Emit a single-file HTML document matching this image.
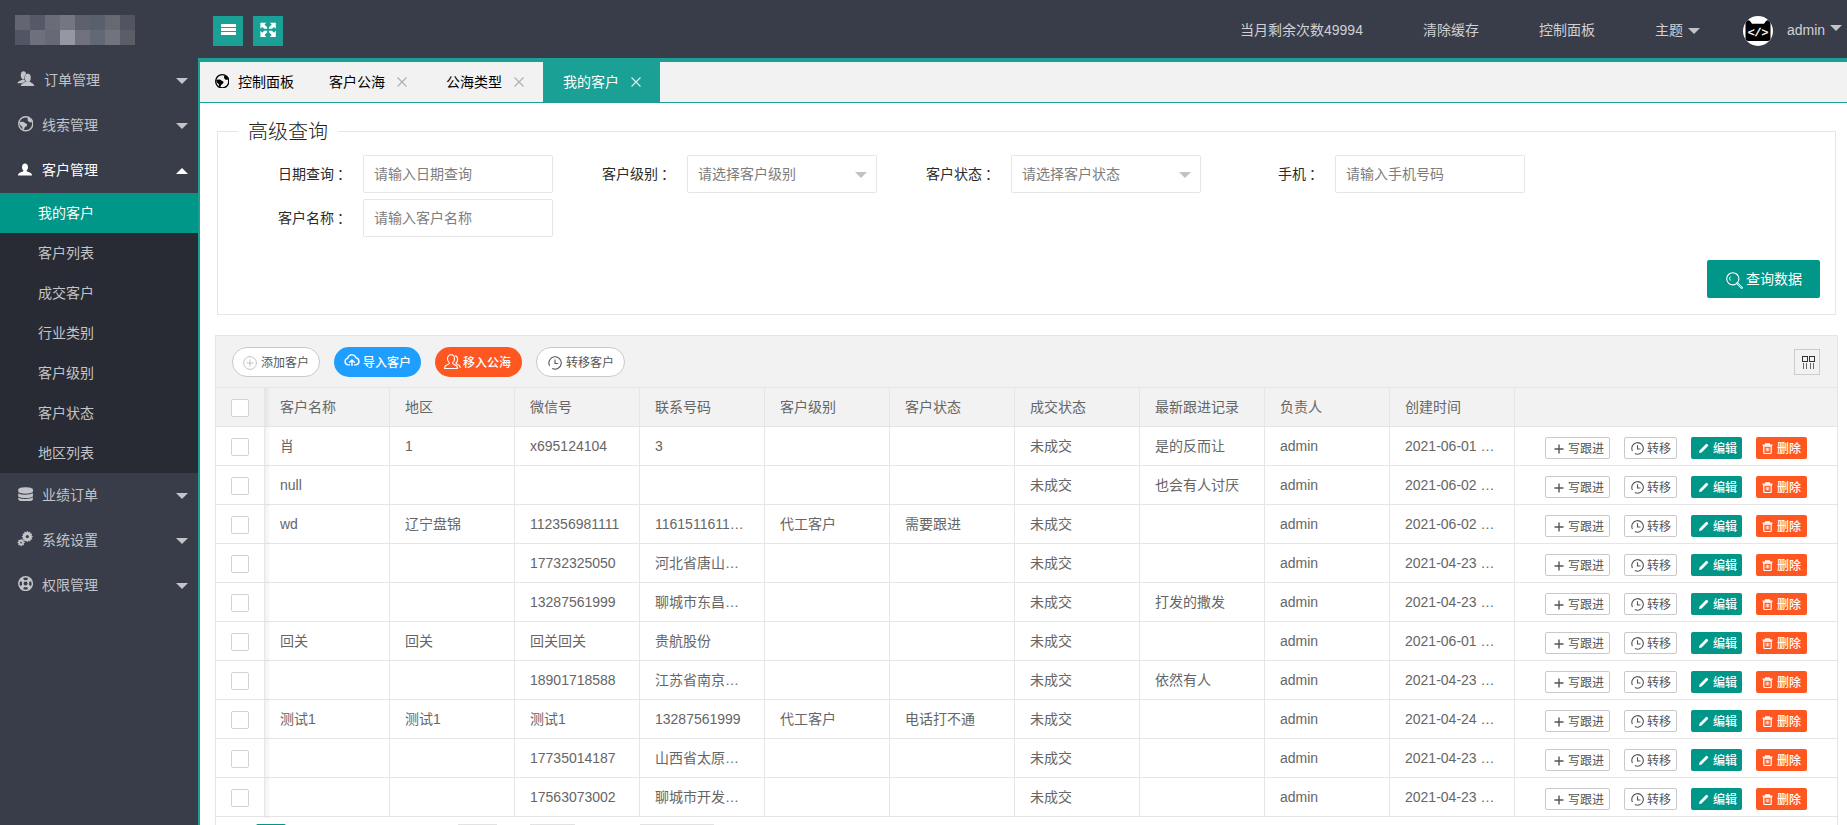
<!DOCTYPE html>
<html lang="zh-CN">
<head>
<meta charset="utf-8">
<title>我的客户</title>
<style>
*{box-sizing:border-box;margin:0;padding:0}
html,body{width:1847px;height:825px;overflow:hidden;background:#fff}
body{font-family:"Liberation Sans","Noto Sans CJK SC",sans-serif;font-size:14px;color:#333;position:relative;line-height:24px}
svg{display:block}
.abs{position:absolute}
#header{position:absolute;left:0;top:0;width:1847px;height:58px;background:#393d49}
#logo{position:absolute;left:15px;top:15px;width:120px;height:30px;overflow:hidden}
#logo i{position:absolute;display:block;width:15px;height:15px}
.hbtn{position:absolute;top:16px;width:30px;height:30px;background:#1aa094}
.hbtn svg{position:absolute;left:0;top:0}
.hnav{position:absolute;top:0;height:58px;line-height:60px;color:#d0d1d4;font-size:14px;white-space:nowrap}
.tri{position:absolute;width:0;height:0;border:6px solid transparent}
#side{position:absolute;left:0;top:58px;width:198px;height:767px;background:#393d49}
.nav1{position:absolute;left:0;width:198px;height:45px;line-height:45px;color:#c3c4c8;font-size:14px;white-space:nowrap}
.nav1 span{position:absolute;left:42px;top:0}
.nav1 svg{position:absolute}
.nav1.on{color:#fff}
#sub{position:absolute;left:0;top:135px;width:198px;height:280px;background:#282b33}
.nav2{position:absolute;left:0;width:198px;height:40px;line-height:40px;color:#c3c4c8;padding-left:38px;font-size:14px;white-space:nowrap}
.nav2.on{background:#009688;color:#fff}
#bl{position:absolute;left:198px;top:58px;width:2px;height:767px;background:#1aa094}
#bt{position:absolute;left:198px;top:58px;width:1649px;height:4px;background:#1aa094}
#tabs{position:absolute;left:200px;top:62px;width:1647px;height:40px;background:#f2f2f2}
#tabline{position:absolute;left:200px;top:102px;width:1647px;height:1px;background:#1aa094}
.tab{position:absolute;top:0;height:40px;line-height:40px;font-size:14px;color:#000;white-space:nowrap}
.tab.on{background:#1aa094;color:#fff}
.tab span{position:absolute;top:0}
.tab svg{position:absolute}
#fs{position:absolute;left:217px;top:131px;width:1619px;height:184px;border:1px solid #e6e6e6}
#legend{position:absolute;left:238px;top:117px;width:100px;height:30px;background:#fff;font-size:20px;font-weight:300;line-height:30px;padding-left:10px;color:#222;white-space:nowrap}
.lbl{position:absolute;width:110px;height:38px;line-height:38px;padding-right:15px;text-align:right;font-size:14px;color:#2a2a2a;white-space:nowrap}
.lbl b{font-weight:normal;position:relative;left:3px}
.inp{position:absolute;width:190px;height:38px;border:1px solid #e6e6e6;border-radius:2px;background:#fff;line-height:36px;padding-left:10px;color:#7d7d7d;font-size:14px;white-space:nowrap}
.inp .tri{right:9px;top:15.500px;border-top-color:#c2c2c2}
#qbtn{position:absolute;left:1707px;top:260px;width:113px;height:38px;background:#009688;border-radius:2px;color:#fff;font-size:14px;line-height:38px;white-space:nowrap}
#qbtn span{position:absolute;left:39px;top:0}
#qbtn svg{position:absolute;left:19px;top:11.500px}
#tb{position:absolute;left:215px;top:335px;width:1623px;height:500px;border:1px solid #e6e6e6;background:#fff}
#tool{position:absolute;left:0;top:0;width:1621px;height:52px;background:#f2f2f2;border-bottom:1px solid #e6e6e6}
.pill{position:absolute;top:11px;height:30px;line-height:30px;border-radius:100px;font-size:12px;color:#fff;white-space:nowrap}
.pill.pri{background:#fff;border:1px solid #c9c9c9;color:#555;line-height:28px}
.pill span{position:absolute;top:1px}
.pill svg{position:absolute}
#colbtn{position:absolute;left:1578px;top:13px;width:26px;height:26px;border:1px solid #ccc;background:#f2f2f2}
#thead{position:absolute;left:0;top:52px;width:1621px;height:39px;background:#f2f2f2;border-bottom:1px solid #e6e6e6}
.row{position:absolute;left:0;width:1621px;height:39px;border-bottom:1px solid #e6e6e6;background:#fff}
.c{position:absolute;top:0;height:38px;line-height:38px;padding-left:15px;border-right:1px solid #e6e6e6;width:125px;color:#666;font-size:14px;white-space:nowrap;overflow:hidden}
.ck{position:absolute;left:15px;top:11px;width:18px;height:18px;border:1px solid #d2d2d2;border-radius:2px;background:#fff}
.c0{left:0;width:49px}
.c1{left:49px}.c2{left:174px}.c3{left:299px}.c4{left:424px}.c5{left:549px}.c6{left:674px}.c7{left:799px}.c8{left:924px}.c9{left:1049px}.c10{left:1174px}
.c11{left:1299px;width:322px;border-right:0}
.b{position:absolute;top:10px;height:22px;line-height:22px;font-size:12px;border-radius:2px;color:#fff;white-space:nowrap}
.b.pri{background:#fff;border:1px solid #c9c9c9;color:#555;line-height:20px}
.b span{position:absolute;top:1px}
.b3 span,.b4 span,.pill.fw span{font-weight:500}
.b svg{position:absolute}
.b1{left:30px;width:65px}.b2{left:109px;width:53px}.b3{left:176px;width:51px;background:#009688}.b4{left:241px;width:51px;background:#ff5722}
#shadow{position:absolute;left:49px;top:52px;width:6px;height:430px;background:linear-gradient(to right,rgba(0,0,0,.05),rgba(0,0,0,0))}
</style>
</head>
<body>
<div id="header">
<div id="logo"><i style="left:0px;top:0;background:#636572"></i><i style="left:15px;top:0;background:#555967"></i><i style="left:30px;top:0;background:#6a6c77"></i><i style="left:45px;top:0;background:#747680"></i><i style="left:60px;top:0;background:#5e606b"></i><i style="left:75px;top:0;background:#58606c"></i><i style="left:90px;top:0;background:#666872"></i><i style="left:105px;top:0;background:#525561"></i><i style="left:0px;top:15px;background:#525664"></i><i style="left:15px;top:15px;background:#6e717b"></i><i style="left:30px;top:15px;background:#676976"></i><i style="left:45px;top:15px;background:#9597a1"></i><i style="left:60px;top:15px;background:#70717e"></i><i style="left:75px;top:15px;background:#626974"></i><i style="left:90px;top:15px;background:#71737d"></i><i style="left:105px;top:15px;background:#5b5e66"></i></div>
<div class="hbtn" style="left:213px"><svg width="30" height="30" viewBox="0 0 30 30"><rect x="8" y="8" width="15" height="3" fill="#fff"/><rect x="8" y="12" width="15" height="3" fill="#fff"/><rect x="8" y="16" width="15" height="3" fill="#fff"/></svg></div>
<div class="hbtn" style="left:253px"><svg width="30" height="30" viewBox="0 0 30 30"><g fill="#fff"><path d="M7.4 6.7L13.4 6.7L11.5 8.6L14.2 11.3L14.2 12.8L11.2 12.8L9.3 10.9L7.4 12.8z"/><path d="M22.8 6.7L16.8 6.7L18.7 8.6L16.0 11.3L16.0 12.8L19.0 12.8L20.9 10.9L22.8 12.8z"/><path d="M7.4 20.9L13.4 20.9L11.5 19.0L14.2 16.3L14.2 14.8L11.2 14.8L9.3 16.7L7.4 14.8z"/><path d="M22.8 20.9L16.8 20.9L18.7 19.0L16.0 16.3L16.0 14.8L19.0 14.8L20.9 16.7L22.8 14.8z"/></g></svg></div>
<div class="hnav" style="left:1240px">当月剩余次数49994</div>
<div class="hnav" style="left:1423px">清除缓存</div>
<div class="hnav" style="left:1539px">控制面板</div>
<div class="hnav" style="left:1655px">主题</div>
<div class="tri" style="left:1688px;top:28px;border-top-color:#c3c4c8"></div>
<div class="abs" id="avatar" style="left:1743px;top:16px;width:30px;height:30px;border-radius:50%;background:#fff;overflow:hidden"><svg width="30" height="30" viewBox="0 1 30 30"><path d="M4.400 5.300Q6 5 7 6L9 8.700H21L23 6Q24 5 25.600 5.300Q27.500 6 27.500 8V23.600Q27.500 26 25 26H5Q2.500 26 2.500 23.600V8Q2.500 6 4.400 5.300z" fill="#000"/><text x="15" y="21" font-size="11.500" font-family="Liberation Mono,monospace" stroke="#fff" stroke-width=".35" fill="#fff" text-anchor="middle">&lt;/&gt;</text></svg></div>
<div class="hnav" style="left:1787px">admin</div>
<div class="tri" style="left:1830px;top:25px;border-top-color:#c3c4c8"></div>
</div>
<div id="side">
<div class="nav1" style="top:0px"><svg style="left:17px;top:12px" width="18" height="17" viewBox="0 0 18 17"><g fill="#c3c4c8"><ellipse cx="6.500" cy="5.300" rx="2.700" ry="4.100"/><path d="M.4 13.300C.7 11.500 3 10.900 5.200 9.800L7.800 9.800 7.800 13.300z"/><g stroke="#393d49" stroke-width=".9"><ellipse cx="10.800" cy="7.700" rx="3" ry="4"/><path d="M3.800 16C4.100 13.600 7 12.900 9.300 11.400L12.300 11.400C14.600 12.900 16.900 13.600 17.300 16z"/></g><ellipse cx="10.800" cy="7.700" rx="2.900" ry="3.900"/><path d="M3.800 16C4.100 13.600 7 12.900 9.300 11.200L12.300 11.200C14.600 12.900 16.900 13.600 17.300 16z"/></g></svg><span style="left:44px">订单管理</span><div class="tri" style="left:176px;top:20px;border-top-color:#c3c4c8"></div></div>
<div class="nav1" style="top:45px"><svg style="left:17.5px;top:13.2px" width="15.5" height="15.5" viewBox="0 0 15 15"><circle cx="7.500" cy="7.500" r="6.800" fill="none" stroke="#c3c4c8" stroke-width="1.3"/><path d="M1.500 5.900L5 5.600 8.800 8 8.500 9.600 6.600 11 5.600 13.300 4.200 13.100 4 10.500 2.200 9 1.400 7z" fill="#c3c4c8"/><path d="M9.500 1.800L11.800 2.500 13.600 5 12.600 6.300 10.500 5.600 9.300 4z" fill="#c3c4c8"/></svg><span style="left:42px">线索管理</span><div class="tri" style="left:176px;top:20px;border-top-color:#c3c4c8"></div></div>
<div class="nav1 on" style="top:90px"><svg style="left:18px;top:14.500px" width="14" height="13" viewBox="0 0 14 13"><path d="M7 .5c1.800 0 3 1.500 3 3.600 0 1.700-.7 2.900-1.500 3.500 0 .7.500 1 2 1.500 1.800.6 3.500 1.400 3.500 3.400H0c0-2 1.700-2.800 3.500-3.400 1.500-.5 2-.8 2-1.500-.8-.6-1.500-1.800-1.500-3.500C4 2 5.200.5 7 .5z" fill="#fff"/></svg><span style="left:42px">客户管理</span><div class="tri" style="left:176px;top:14px;border-bottom-color:#fff"></div></div>
<div id="sub"><div class="nav2 on" style="top:0px">我的客户</div><div class="nav2" style="top:40px">客户列表</div><div class="nav2" style="top:80px">成交客户</div><div class="nav2" style="top:120px">行业类别</div><div class="nav2" style="top:160px">客户级别</div><div class="nav2" style="top:200px">客户状态</div><div class="nav2" style="top:240px">地区列表</div></div>
<div class="nav1" style="top:415px"><svg style="left:17.500px;top:13.500px" width="15.200" height="14.600" viewBox="0 0 15 14.500"><path d="M.2 2.600C.2-.5 14.800-.5 14.800 2.600V11.900C14.800 15.300.2 15.300.2 11.900z" fill="#c3c4c8"/><path d="M0 5.500C3 7.700 12 7.700 15 5.500M0 9.800C3 12 12 12 15 9.800" fill="none" stroke="#393d49" stroke-width="1.100"/></svg><span style="left:42px">业绩订单</span><div class="tri" style="left:176px;top:20px;border-top-color:#c3c4c8"></div></div>
<div class="nav1" style="top:460px"><svg style="left:17px;top:12px" width="17" height="17" viewBox="0 0 17 17"><path d="M15.78 6.17L15.78 7.03L14.72 7.42L14.54 8.10L15.26 8.97L14.83 9.72L13.72 9.52L13.22 10.02L13.42 11.13L12.67 11.56L11.80 10.84L11.12 11.02L10.73 12.08L9.87 12.08L9.48 11.02L8.80 10.84L7.93 11.56L7.18 11.13L7.38 10.02L6.88 9.52L5.77 9.72L5.34 8.97L6.06 8.10L5.88 7.42L4.82 7.03L4.82 6.17L5.88 5.78L6.06 5.10L5.34 4.23L5.77 3.48L6.88 3.68L7.38 3.18L7.18 2.07L7.93 1.64L8.80 2.36L9.48 2.18L9.87 1.12L10.73 1.12L11.12 2.18L11.80 2.36L12.67 1.64L13.42 2.07L13.22 3.18L13.72 3.68L14.83 3.48L15.26 4.23L14.54 5.10L14.72 5.78z" fill="#c3c4c8"/><circle cx="10.3" cy="6.6" r="1.6" fill="#393d49"/><path d="M7.77 12.17L7.77 13.03L6.79 13.36L6.54 13.97L7.01 14.89L6.39 15.51L5.47 15.04L4.86 15.29L4.53 16.27L3.67 16.27L3.34 15.29L2.73 15.04L1.81 15.51L1.19 14.89L1.66 13.97L1.41 13.36L0.43 13.03L0.43 12.17L1.41 11.84L1.66 11.23L1.19 10.31L1.81 9.69L2.73 10.16L3.34 9.91L3.67 8.93L4.53 8.93L4.86 9.91L5.47 10.16L6.39 9.69L7.01 10.31L6.54 11.23L6.79 11.84z" fill="#c3c4c8"/><circle cx="4.1" cy="12.6" r="0.9" fill="#393d49"/></svg><span style="left:42px">系统设置</span><div class="tri" style="left:176px;top:20px;border-top-color:#c3c4c8"></div></div>
<div class="nav1" style="top:505px"><svg style="left:17.500px;top:13.200px" width="15.200" height="15.200" viewBox="0 0 15.200 15.200"><circle cx="7.600" cy="7.600" r="7.500" fill="#c3c4c8"/><circle cx="7.600" cy="7.600" r="2" fill="#393d49"/><path d="M6.10 4.22L5.16 2.12A6.0 6.0 0 0 1 10.04 2.12L9.10 4.22A3.7 3.7 0 0 0 6.10 4.22z" fill="#393d49"/><path d="M10.98 6.10L13.08 5.16A6.0 6.0 0 0 1 13.08 10.04L10.98 9.10A3.7 3.7 0 0 0 10.98 6.10z" fill="#393d49"/><path d="M9.10 10.98L10.04 13.08A6.0 6.0 0 0 1 5.16 13.08L6.10 10.98A3.7 3.7 0 0 0 9.10 10.98z" fill="#393d49"/><path d="M4.22 9.10L2.12 10.04A6.0 6.0 0 0 1 2.12 5.16L4.22 6.10A3.7 3.7 0 0 0 4.22 9.10z" fill="#393d49"/></svg><span style="left:42px">权限管理</span><div class="tri" style="left:176px;top:20px;border-top-color:#c3c4c8"></div></div>
</div>
<div id="bl"></div><div id="bt"></div>
<div id="tabs">
<div class="tab" style="left:0;width:109px"><svg style="left:14.7px;top:11.7px" width="14.5" height="14.5" viewBox="0 0 15 15"><circle cx="7.500" cy="7.500" r="6.800" fill="none" stroke="#000" stroke-width="1.4"/><path d="M1.500 5.900L5 5.600 8.800 8 8.500 9.600 6.600 11 5.600 13.300 4.200 13.100 4 10.500 2.200 9 1.400 7z" fill="#000"/><path d="M9.500 1.800L11.800 2.500 13.600 5 12.600 6.300 10.500 5.600 9.300 4z" fill="#000"/></svg><span style="left:38px">控制面板</span></div>
<div class="tab" style="left:109px;width:117px"><span style="left:20px">客户公海</span><svg style="left:88px;top:15px" width="10" height="10" viewBox="0 0 10 10"><path d="M.5.500l9 9M9.500.500l-9 9" stroke="#b0b0b0" stroke-width="1.2" fill="none"/></svg></div>
<div class="tab" style="left:226px;width:117px"><span style="left:20px">公海类型</span><svg style="left:88px;top:15px" width="10" height="10" viewBox="0 0 10 10"><path d="M.5.500l9 9M9.500.500l-9 9" stroke="#b0b0b0" stroke-width="1.2" fill="none"/></svg></div>
<div class="tab on" style="left:343px;width:117px"><span style="left:20px">我的客户</span><svg style="left:88px;top:15px" width="10" height="10" viewBox="0 0 10 10"><path d="M.5.500l9 9M9.500.500l-9 9" stroke="#d8efed" stroke-width="1.2" fill="none"/></svg></div>
</div><div id="tabline"></div>
<div id="fs"></div>
<div id="legend">高级查询</div>
<div class="lbl" style="left:253px;top:155px">日期查询<b>：</b></div>
<div class="inp" style="left:363px;top:155px">请输入日期查询</div>
<div class="lbl" style="left:577px;top:155px">客户级别<b>：</b></div>
<div class="inp" style="left:687px;top:155px">请选择客户级别<div class=tri></div></div>
<div class="lbl" style="left:901px;top:155px">客户状态<b>：</b></div>
<div class="inp" style="left:1011px;top:155px">请选择客户状态<div class=tri></div></div>
<div class="lbl" style="left:1225px;top:155px">手机<b>：</b></div>
<div class="inp" style="left:1335px;top:155px">请输入手机号码</div>
<div class="lbl" style="left:253px;top:199px">客户名称<b>：</b></div>
<div class="inp" style="left:363px;top:199px">请输入客户名称</div>
<div id="qbtn"><svg width="17" height="17" viewBox="0 0 17 17"><circle cx="6.800" cy="6.800" r="6.100" fill="none" stroke="#fff" stroke-width="1.100"/><path d="M4.300 4.600a3.400 3.400 0 0 0 0 4" fill="none" stroke="#fff" stroke-width="1"/><path d="M11.200 11.200l4.600 4.600" stroke="#fff" stroke-width="2.200" stroke-linecap="round"/><path d="M11.700 11.700l3.800 3.800" stroke="#009688" stroke-width=".7" stroke-linecap="round"/></svg><span>查询数据</span></div>
<div id="tb">
<div id="tool">
<div class="pill pri" style="left:16px;width:88px"><svg style="left:10px;top:8px" width="14" height="14" viewBox="0 0 14 14"><circle cx="7" cy="7" r="6.400" fill="none" stroke="#bbb" stroke-width=".9"/><path d="M7 3.500v7M3.500 7h7" stroke="#bbb" stroke-width=".9"/></svg><span style="left:28px">添加客户</span></div>
<div class="pill fw" style="left:118px;width:87px;background:#1e9fff"><svg style="left:10px;top:7px" width="16" height="12" viewBox="0 0 16 12"><path d="M5.500 10.900H4.200A3.300 3.300 0 0 1 3.600 4.400 4.400 4.400 0 0 1 12 3.700a3.700 3.700 0 0 1 .2 7.200h-1.700" fill="none" stroke="#fff" stroke-width="1.400" stroke-linecap="round"/><path d="M8 11.500V6.200M5.700 8.300L8 6l2.300 2.300" fill="none" stroke="#fff" stroke-width="1.400" stroke-linecap="round" stroke-linejoin="round"/></svg><span style="left:29px">导入客户</span></div>
<div class="pill fw" style="left:219px;width:87px;background:#ff5722"><svg style="left:9px;top:7px" width="17" height="16" viewBox="0 0 17 16"><path d="M7 .800c2.100 0 3.500 1.700 3.500 4 0 1.900-.9 3.400-1.900 4.100 0 .8.600 1.200 2.200 1.900 1.900.7 2.700 1.500 2.700 3.700H.500c0-2.200.8-3 2.700-3.700 1.600-.7 2.200-1.100 2.200-1.900-1-.7-1.900-2.200-1.900-4.100 0-2.300 1.400-4 3.500-4z" fill="none" stroke="#fff" stroke-width="1.100" stroke-linejoin="round"/><path d="M11.300 1.800c1.500.5 2.300 1.900 2.300 3.700 0 1.700-.7 2.900-1.600 3.600.1.700.7 1.100 2 1.700 1.500.6 2.200 1.300 2.300 2.700" fill="none" stroke="#fff" stroke-width="1.100" stroke-linecap="round"/></svg><span style="left:28px">移入公海</span></div>
<div class="pill pri" style="left:320px;width:89px"><svg style="left:11px;top:8px" width="14" height="14" viewBox="0 0 14 14"><path d="M4.200 12.400A6.200 6.200 0 1 0 1.600 9.800" fill="none" stroke="#555" stroke-width="1.1"/><path d="M7 3.500v4h3.200" fill="none" stroke="#555" stroke-width="1.1"/></svg><span style="left:29px">转移客户</span></div>
<div id="colbtn"><svg width="24" height="24" viewBox="0 0 24 24"><g fill="none" stroke="#333" stroke-width="1"><rect x="7.500" y="6.500" width="5" height="5"/><rect x="14.500" y="6.500" width="5" height="5"/></g><path d="M8.500 13v6M11.500 13v6M15.500 13v6M18.500 13v6" stroke="#666" stroke-width="1" fill="none"/></svg></div>
</div>
<div id="thead"><div class="c c0" style="background:#f2f2f2"><div class="ck" style="top:11px"></div></div><div class="c c1">客户名称</div><div class="c c2">地区</div><div class="c c3">微信号</div><div class="c c4">联系号码</div><div class="c c5">客户级别</div><div class="c c6">客户状态</div><div class="c c7">成交状态</div><div class="c c8">最新跟进记录</div><div class="c c9">负责人</div><div class="c c10">创建时间</div><div class="c c11"></div></div>
<div class="row" style="top:91px"><div class="c c0"><div class="ck"></div></div><div class="c c1">肖</div><div class="c c2">1</div><div class="c c3">x695124104</div><div class="c c4">3</div><div class="c c5"></div><div class="c c6"></div><div class="c c7">未成交</div><div class="c c8">是的反而让</div><div class="c c9">admin</div><div class="c c10">2021-06-01 …</div><div class="c c11"><div class="b pri b1"><svg style="left:7.500px;top:6px" width="10" height="10" viewBox="0 0 10 10"><path d="M5 .500v9M.500 5h9" stroke="#555" stroke-width="1.400"/></svg><span style="left:22px">写跟进</span></div><div class="b pri b2"><svg style="left:5.7px;top:4px" width="13" height="13" viewBox="0 0 14 14"><path d="M4.200 12.400A6.200 6.200 0 1 0 1.600 9.800" fill="none" stroke="#555" stroke-width="1.2"/><path d="M7 3.500v4h3.200" fill="none" stroke="#555" stroke-width="1.2"/></svg><span style="left:22px">转移</span></div><div class="b b3"><svg style="left:6.500px;top:5.500px" width="11" height="11" viewBox="0 0 11 11"><path d="M1 10l.6-2.600L8 1a.8.800 0 0 1 1.100 0l.9.900a.8.800 0 0 1 0 1.100L3.600 9.400z" fill="#fff"/></svg><span style="left:22px">编辑</span></div><div class="b b4"><svg style="left:6px;top:5.500px" width="11" height="11" viewBox="0 0 11 11"><path d="M.5 2.200h10M3.600 2V.900h3.800V2" fill="none" stroke="#fff" stroke-width="1.200"/><path d="M1.800 3.200h7.400v6.300a1 1 0 0 1-1 1H2.800a1 1 0 0 1-1-1z" fill="none" stroke="#fff" stroke-width="1.200"/><path d="M4.200 4.800v3.600M5.500 4.800v3.600M6.800 4.800v3.600" stroke="#fff" stroke-width=".8"/></svg><span style="left:21px">删除</span></div></div></div>
<div class="row" style="top:130px"><div class="c c0"><div class="ck"></div></div><div class="c c1">null</div><div class="c c2"></div><div class="c c3"></div><div class="c c4"></div><div class="c c5"></div><div class="c c6"></div><div class="c c7">未成交</div><div class="c c8">也会有人讨厌</div><div class="c c9">admin</div><div class="c c10">2021-06-02 …</div><div class="c c11"><div class="b pri b1"><svg style="left:7.500px;top:6px" width="10" height="10" viewBox="0 0 10 10"><path d="M5 .500v9M.500 5h9" stroke="#555" stroke-width="1.400"/></svg><span style="left:22px">写跟进</span></div><div class="b pri b2"><svg style="left:5.7px;top:4px" width="13" height="13" viewBox="0 0 14 14"><path d="M4.200 12.400A6.200 6.200 0 1 0 1.600 9.800" fill="none" stroke="#555" stroke-width="1.2"/><path d="M7 3.500v4h3.200" fill="none" stroke="#555" stroke-width="1.2"/></svg><span style="left:22px">转移</span></div><div class="b b3"><svg style="left:6.500px;top:5.500px" width="11" height="11" viewBox="0 0 11 11"><path d="M1 10l.6-2.600L8 1a.8.800 0 0 1 1.100 0l.9.900a.8.800 0 0 1 0 1.100L3.600 9.400z" fill="#fff"/></svg><span style="left:22px">编辑</span></div><div class="b b4"><svg style="left:6px;top:5.500px" width="11" height="11" viewBox="0 0 11 11"><path d="M.5 2.200h10M3.600 2V.900h3.800V2" fill="none" stroke="#fff" stroke-width="1.200"/><path d="M1.800 3.200h7.400v6.300a1 1 0 0 1-1 1H2.800a1 1 0 0 1-1-1z" fill="none" stroke="#fff" stroke-width="1.200"/><path d="M4.200 4.800v3.600M5.500 4.800v3.600M6.800 4.800v3.600" stroke="#fff" stroke-width=".8"/></svg><span style="left:21px">删除</span></div></div></div>
<div class="row" style="top:169px"><div class="c c0"><div class="ck"></div></div><div class="c c1">wd</div><div class="c c2">辽宁盘锦</div><div class="c c3">112356981111</div><div class="c c4">1161511611…</div><div class="c c5">代工客户</div><div class="c c6">需要跟进</div><div class="c c7">未成交</div><div class="c c8"></div><div class="c c9">admin</div><div class="c c10">2021-06-02 …</div><div class="c c11"><div class="b pri b1"><svg style="left:7.500px;top:6px" width="10" height="10" viewBox="0 0 10 10"><path d="M5 .500v9M.500 5h9" stroke="#555" stroke-width="1.400"/></svg><span style="left:22px">写跟进</span></div><div class="b pri b2"><svg style="left:5.7px;top:4px" width="13" height="13" viewBox="0 0 14 14"><path d="M4.200 12.400A6.200 6.200 0 1 0 1.600 9.800" fill="none" stroke="#555" stroke-width="1.2"/><path d="M7 3.500v4h3.200" fill="none" stroke="#555" stroke-width="1.2"/></svg><span style="left:22px">转移</span></div><div class="b b3"><svg style="left:6.500px;top:5.500px" width="11" height="11" viewBox="0 0 11 11"><path d="M1 10l.6-2.600L8 1a.8.800 0 0 1 1.100 0l.9.900a.8.800 0 0 1 0 1.100L3.600 9.400z" fill="#fff"/></svg><span style="left:22px">编辑</span></div><div class="b b4"><svg style="left:6px;top:5.500px" width="11" height="11" viewBox="0 0 11 11"><path d="M.5 2.200h10M3.600 2V.900h3.800V2" fill="none" stroke="#fff" stroke-width="1.200"/><path d="M1.800 3.200h7.400v6.300a1 1 0 0 1-1 1H2.800a1 1 0 0 1-1-1z" fill="none" stroke="#fff" stroke-width="1.200"/><path d="M4.200 4.800v3.600M5.500 4.800v3.600M6.800 4.800v3.600" stroke="#fff" stroke-width=".8"/></svg><span style="left:21px">删除</span></div></div></div>
<div class="row" style="top:208px"><div class="c c0"><div class="ck"></div></div><div class="c c1"></div><div class="c c2"></div><div class="c c3">17732325050</div><div class="c c4">河北省唐山…</div><div class="c c5"></div><div class="c c6"></div><div class="c c7">未成交</div><div class="c c8"></div><div class="c c9">admin</div><div class="c c10">2021-04-23 …</div><div class="c c11"><div class="b pri b1"><svg style="left:7.500px;top:6px" width="10" height="10" viewBox="0 0 10 10"><path d="M5 .500v9M.500 5h9" stroke="#555" stroke-width="1.400"/></svg><span style="left:22px">写跟进</span></div><div class="b pri b2"><svg style="left:5.7px;top:4px" width="13" height="13" viewBox="0 0 14 14"><path d="M4.200 12.400A6.200 6.200 0 1 0 1.600 9.800" fill="none" stroke="#555" stroke-width="1.2"/><path d="M7 3.500v4h3.200" fill="none" stroke="#555" stroke-width="1.2"/></svg><span style="left:22px">转移</span></div><div class="b b3"><svg style="left:6.500px;top:5.500px" width="11" height="11" viewBox="0 0 11 11"><path d="M1 10l.6-2.600L8 1a.8.800 0 0 1 1.100 0l.9.900a.8.800 0 0 1 0 1.100L3.600 9.400z" fill="#fff"/></svg><span style="left:22px">编辑</span></div><div class="b b4"><svg style="left:6px;top:5.500px" width="11" height="11" viewBox="0 0 11 11"><path d="M.5 2.200h10M3.600 2V.900h3.800V2" fill="none" stroke="#fff" stroke-width="1.200"/><path d="M1.800 3.200h7.400v6.300a1 1 0 0 1-1 1H2.800a1 1 0 0 1-1-1z" fill="none" stroke="#fff" stroke-width="1.200"/><path d="M4.200 4.800v3.600M5.500 4.800v3.600M6.800 4.800v3.600" stroke="#fff" stroke-width=".8"/></svg><span style="left:21px">删除</span></div></div></div>
<div class="row" style="top:247px"><div class="c c0"><div class="ck"></div></div><div class="c c1"></div><div class="c c2"></div><div class="c c3">13287561999</div><div class="c c4">聊城市东昌…</div><div class="c c5"></div><div class="c c6"></div><div class="c c7">未成交</div><div class="c c8">打发的撒发</div><div class="c c9">admin</div><div class="c c10">2021-04-23 …</div><div class="c c11"><div class="b pri b1"><svg style="left:7.500px;top:6px" width="10" height="10" viewBox="0 0 10 10"><path d="M5 .500v9M.500 5h9" stroke="#555" stroke-width="1.400"/></svg><span style="left:22px">写跟进</span></div><div class="b pri b2"><svg style="left:5.7px;top:4px" width="13" height="13" viewBox="0 0 14 14"><path d="M4.200 12.400A6.200 6.200 0 1 0 1.600 9.800" fill="none" stroke="#555" stroke-width="1.2"/><path d="M7 3.500v4h3.200" fill="none" stroke="#555" stroke-width="1.2"/></svg><span style="left:22px">转移</span></div><div class="b b3"><svg style="left:6.500px;top:5.500px" width="11" height="11" viewBox="0 0 11 11"><path d="M1 10l.6-2.600L8 1a.8.800 0 0 1 1.100 0l.9.900a.8.800 0 0 1 0 1.100L3.600 9.400z" fill="#fff"/></svg><span style="left:22px">编辑</span></div><div class="b b4"><svg style="left:6px;top:5.500px" width="11" height="11" viewBox="0 0 11 11"><path d="M.5 2.200h10M3.600 2V.900h3.800V2" fill="none" stroke="#fff" stroke-width="1.200"/><path d="M1.800 3.200h7.400v6.300a1 1 0 0 1-1 1H2.800a1 1 0 0 1-1-1z" fill="none" stroke="#fff" stroke-width="1.200"/><path d="M4.200 4.800v3.600M5.500 4.800v3.600M6.800 4.800v3.600" stroke="#fff" stroke-width=".8"/></svg><span style="left:21px">删除</span></div></div></div>
<div class="row" style="top:286px"><div class="c c0"><div class="ck"></div></div><div class="c c1">回关</div><div class="c c2">回关</div><div class="c c3">回关回关</div><div class="c c4">贵航股份</div><div class="c c5"></div><div class="c c6"></div><div class="c c7">未成交</div><div class="c c8"></div><div class="c c9">admin</div><div class="c c10">2021-06-01 …</div><div class="c c11"><div class="b pri b1"><svg style="left:7.500px;top:6px" width="10" height="10" viewBox="0 0 10 10"><path d="M5 .500v9M.500 5h9" stroke="#555" stroke-width="1.400"/></svg><span style="left:22px">写跟进</span></div><div class="b pri b2"><svg style="left:5.7px;top:4px" width="13" height="13" viewBox="0 0 14 14"><path d="M4.200 12.400A6.200 6.200 0 1 0 1.600 9.800" fill="none" stroke="#555" stroke-width="1.2"/><path d="M7 3.500v4h3.200" fill="none" stroke="#555" stroke-width="1.2"/></svg><span style="left:22px">转移</span></div><div class="b b3"><svg style="left:6.500px;top:5.500px" width="11" height="11" viewBox="0 0 11 11"><path d="M1 10l.6-2.600L8 1a.8.800 0 0 1 1.100 0l.9.900a.8.800 0 0 1 0 1.100L3.600 9.400z" fill="#fff"/></svg><span style="left:22px">编辑</span></div><div class="b b4"><svg style="left:6px;top:5.500px" width="11" height="11" viewBox="0 0 11 11"><path d="M.5 2.200h10M3.600 2V.900h3.800V2" fill="none" stroke="#fff" stroke-width="1.200"/><path d="M1.800 3.200h7.400v6.300a1 1 0 0 1-1 1H2.800a1 1 0 0 1-1-1z" fill="none" stroke="#fff" stroke-width="1.200"/><path d="M4.200 4.800v3.600M5.500 4.800v3.600M6.800 4.800v3.600" stroke="#fff" stroke-width=".8"/></svg><span style="left:21px">删除</span></div></div></div>
<div class="row" style="top:325px"><div class="c c0"><div class="ck"></div></div><div class="c c1"></div><div class="c c2"></div><div class="c c3">18901718588</div><div class="c c4">江苏省南京…</div><div class="c c5"></div><div class="c c6"></div><div class="c c7">未成交</div><div class="c c8">依然有人</div><div class="c c9">admin</div><div class="c c10">2021-04-23 …</div><div class="c c11"><div class="b pri b1"><svg style="left:7.500px;top:6px" width="10" height="10" viewBox="0 0 10 10"><path d="M5 .500v9M.500 5h9" stroke="#555" stroke-width="1.400"/></svg><span style="left:22px">写跟进</span></div><div class="b pri b2"><svg style="left:5.7px;top:4px" width="13" height="13" viewBox="0 0 14 14"><path d="M4.200 12.400A6.200 6.200 0 1 0 1.600 9.800" fill="none" stroke="#555" stroke-width="1.2"/><path d="M7 3.500v4h3.200" fill="none" stroke="#555" stroke-width="1.2"/></svg><span style="left:22px">转移</span></div><div class="b b3"><svg style="left:6.500px;top:5.500px" width="11" height="11" viewBox="0 0 11 11"><path d="M1 10l.6-2.600L8 1a.8.800 0 0 1 1.100 0l.9.900a.8.800 0 0 1 0 1.100L3.600 9.400z" fill="#fff"/></svg><span style="left:22px">编辑</span></div><div class="b b4"><svg style="left:6px;top:5.500px" width="11" height="11" viewBox="0 0 11 11"><path d="M.5 2.200h10M3.600 2V.900h3.800V2" fill="none" stroke="#fff" stroke-width="1.200"/><path d="M1.800 3.200h7.400v6.300a1 1 0 0 1-1 1H2.800a1 1 0 0 1-1-1z" fill="none" stroke="#fff" stroke-width="1.200"/><path d="M4.200 4.800v3.600M5.500 4.800v3.600M6.800 4.800v3.600" stroke="#fff" stroke-width=".8"/></svg><span style="left:21px">删除</span></div></div></div>
<div class="row" style="top:364px"><div class="c c0"><div class="ck"></div></div><div class="c c1">测试1</div><div class="c c2">测试1</div><div class="c c3">测试1</div><div class="c c4">13287561999</div><div class="c c5">代工客户</div><div class="c c6">电话打不通</div><div class="c c7">未成交</div><div class="c c8"></div><div class="c c9">admin</div><div class="c c10">2021-04-24 …</div><div class="c c11"><div class="b pri b1"><svg style="left:7.500px;top:6px" width="10" height="10" viewBox="0 0 10 10"><path d="M5 .500v9M.500 5h9" stroke="#555" stroke-width="1.400"/></svg><span style="left:22px">写跟进</span></div><div class="b pri b2"><svg style="left:5.7px;top:4px" width="13" height="13" viewBox="0 0 14 14"><path d="M4.200 12.400A6.200 6.200 0 1 0 1.600 9.800" fill="none" stroke="#555" stroke-width="1.2"/><path d="M7 3.500v4h3.200" fill="none" stroke="#555" stroke-width="1.2"/></svg><span style="left:22px">转移</span></div><div class="b b3"><svg style="left:6.500px;top:5.500px" width="11" height="11" viewBox="0 0 11 11"><path d="M1 10l.6-2.600L8 1a.8.800 0 0 1 1.100 0l.9.900a.8.800 0 0 1 0 1.100L3.600 9.400z" fill="#fff"/></svg><span style="left:22px">编辑</span></div><div class="b b4"><svg style="left:6px;top:5.500px" width="11" height="11" viewBox="0 0 11 11"><path d="M.5 2.200h10M3.600 2V.900h3.800V2" fill="none" stroke="#fff" stroke-width="1.200"/><path d="M1.800 3.200h7.400v6.300a1 1 0 0 1-1 1H2.800a1 1 0 0 1-1-1z" fill="none" stroke="#fff" stroke-width="1.200"/><path d="M4.200 4.800v3.600M5.500 4.800v3.600M6.800 4.800v3.600" stroke="#fff" stroke-width=".8"/></svg><span style="left:21px">删除</span></div></div></div>
<div class="row" style="top:403px"><div class="c c0"><div class="ck"></div></div><div class="c c1"></div><div class="c c2"></div><div class="c c3">17735014187</div><div class="c c4">山西省太原…</div><div class="c c5"></div><div class="c c6"></div><div class="c c7">未成交</div><div class="c c8"></div><div class="c c9">admin</div><div class="c c10">2021-04-23 …</div><div class="c c11"><div class="b pri b1"><svg style="left:7.500px;top:6px" width="10" height="10" viewBox="0 0 10 10"><path d="M5 .500v9M.500 5h9" stroke="#555" stroke-width="1.400"/></svg><span style="left:22px">写跟进</span></div><div class="b pri b2"><svg style="left:5.7px;top:4px" width="13" height="13" viewBox="0 0 14 14"><path d="M4.200 12.400A6.200 6.200 0 1 0 1.600 9.800" fill="none" stroke="#555" stroke-width="1.2"/><path d="M7 3.500v4h3.200" fill="none" stroke="#555" stroke-width="1.2"/></svg><span style="left:22px">转移</span></div><div class="b b3"><svg style="left:6.500px;top:5.500px" width="11" height="11" viewBox="0 0 11 11"><path d="M1 10l.6-2.600L8 1a.8.800 0 0 1 1.100 0l.9.900a.8.800 0 0 1 0 1.100L3.600 9.400z" fill="#fff"/></svg><span style="left:22px">编辑</span></div><div class="b b4"><svg style="left:6px;top:5.500px" width="11" height="11" viewBox="0 0 11 11"><path d="M.5 2.200h10M3.600 2V.900h3.800V2" fill="none" stroke="#fff" stroke-width="1.200"/><path d="M1.800 3.200h7.400v6.300a1 1 0 0 1-1 1H2.800a1 1 0 0 1-1-1z" fill="none" stroke="#fff" stroke-width="1.200"/><path d="M4.200 4.800v3.600M5.500 4.800v3.600M6.800 4.800v3.600" stroke="#fff" stroke-width=".8"/></svg><span style="left:21px">删除</span></div></div></div>
<div class="row" style="top:442px"><div class="c c0"><div class="ck"></div></div><div class="c c1"></div><div class="c c2"></div><div class="c c3">17563073002</div><div class="c c4">聊城市开发…</div><div class="c c5"></div><div class="c c6"></div><div class="c c7">未成交</div><div class="c c8"></div><div class="c c9">admin</div><div class="c c10">2021-04-23 …</div><div class="c c11"><div class="b pri b1"><svg style="left:7.500px;top:6px" width="10" height="10" viewBox="0 0 10 10"><path d="M5 .500v9M.500 5h9" stroke="#555" stroke-width="1.400"/></svg><span style="left:22px">写跟进</span></div><div class="b pri b2"><svg style="left:5.7px;top:4px" width="13" height="13" viewBox="0 0 14 14"><path d="M4.200 12.400A6.200 6.200 0 1 0 1.600 9.800" fill="none" stroke="#555" stroke-width="1.2"/><path d="M7 3.500v4h3.200" fill="none" stroke="#555" stroke-width="1.2"/></svg><span style="left:22px">转移</span></div><div class="b b3"><svg style="left:6.500px;top:5.500px" width="11" height="11" viewBox="0 0 11 11"><path d="M1 10l.6-2.600L8 1a.8.800 0 0 1 1.100 0l.9.900a.8.800 0 0 1 0 1.100L3.600 9.400z" fill="#fff"/></svg><span style="left:22px">编辑</span></div><div class="b b4"><svg style="left:6px;top:5.500px" width="11" height="11" viewBox="0 0 11 11"><path d="M.5 2.200h10M3.600 2V.900h3.800V2" fill="none" stroke="#fff" stroke-width="1.200"/><path d="M1.800 3.200h7.400v6.300a1 1 0 0 1-1 1H2.800a1 1 0 0 1-1-1z" fill="none" stroke="#fff" stroke-width="1.200"/><path d="M4.200 4.800v3.600M5.500 4.800v3.600M6.800 4.800v3.600" stroke="#fff" stroke-width=".8"/></svg><span style="left:21px">删除</span></div></div></div>
<div id="shadow"></div>
<div class="abs" style="left:40px;top:488px;width:30px;height:28px;background:#009688;border-radius:2px"></div><div class="abs" style="left:242px;top:488px;width:39px;height:28px;border:1px solid #e2e2e2"></div><div class="abs" style="left:314px;top:488px;width:45px;height:28px;border:1px solid #e2e2e2"></div><div class="abs" style="left:424px;top:488px;width:74px;height:28px;border:1px solid #e2e2e2"></div></div>
</body>
</html>
